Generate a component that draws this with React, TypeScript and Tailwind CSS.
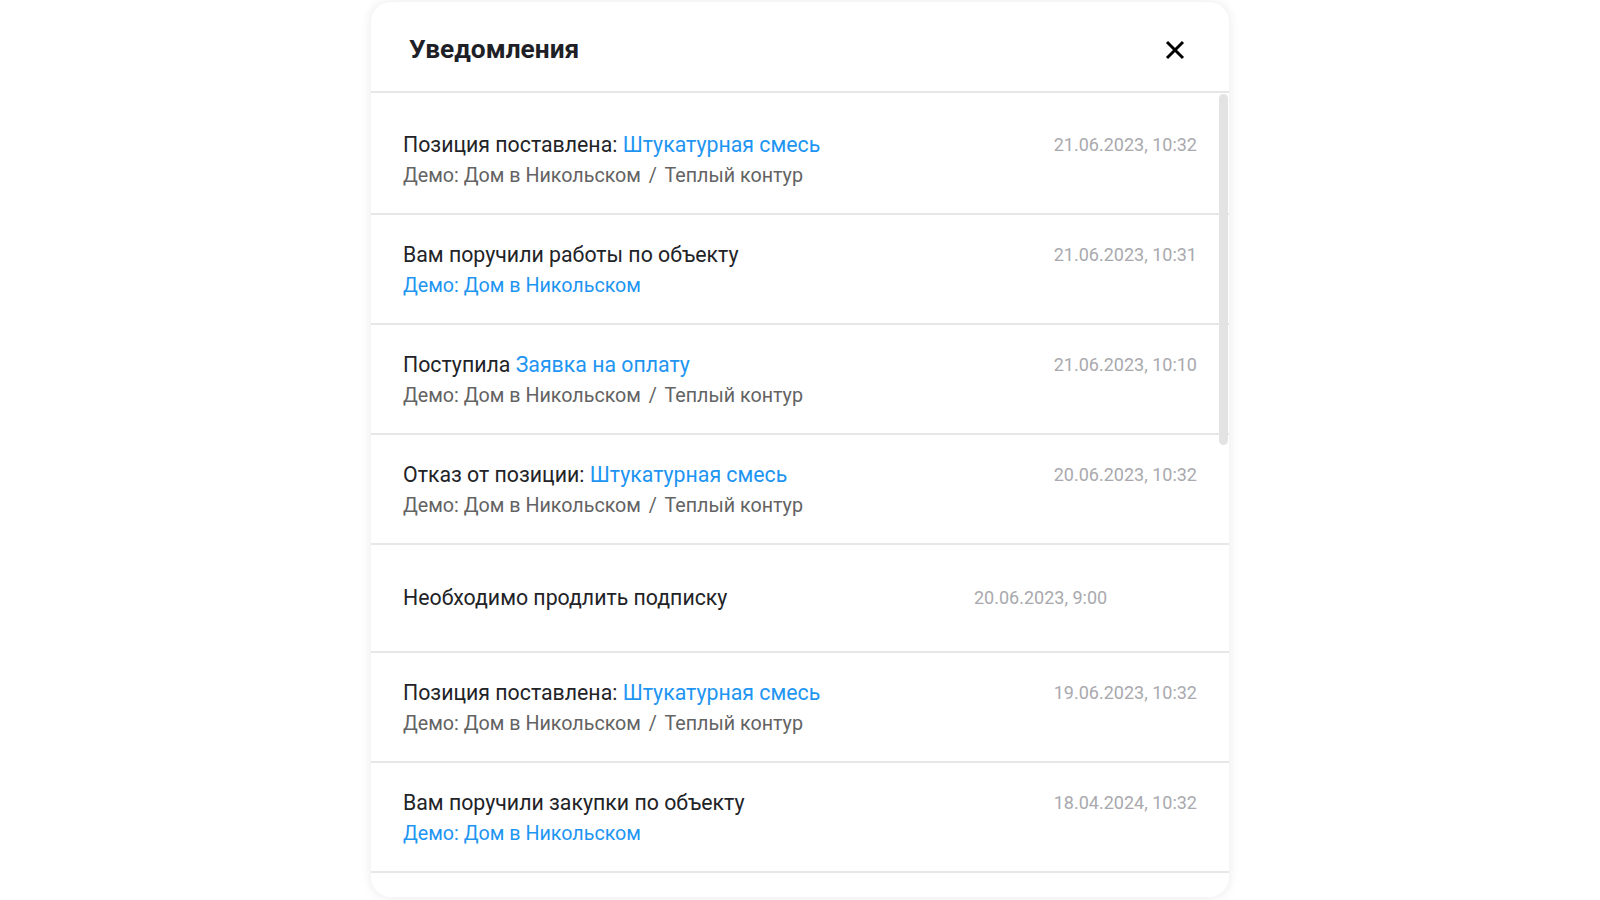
import type { ReactNode } from 'react'

type Notice = {
  title: ReactNode
  sub?: ReactNode
  date: string
  single?: boolean
}

const link = 'text-[#1e95f2]'
const path = (
  <span className="text-[#636363]">
    Демо: Дом в Никольском <span className="mx-[3px]">/</span> Теплый контур
  </span>
)
const object = <span className={link}>Демо: Дом в Никольском</span>

const notices: Notice[] = [
  {
    title: (
      <>
        Позиция поставлена: <span className={link}>Штукатурная смесь</span>
      </>
    ),
    sub: path,
    date: '21.06.2023, 10:32',
  },
  { title: 'Вам поручили работы по объекту', sub: object, date: '21.06.2023, 10:31' },
  {
    title: (
      <>
        Поступила <span className={link}>Заявка на оплату</span>
      </>
    ),
    sub: path,
    date: '21.06.2023, 10:10',
  },
  {
    title: (
      <>
        Отказ от позиции: <span className={link}>Штукатурная смесь</span>
      </>
    ),
    sub: path,
    date: '20.06.2023, 10:32',
  },
  { title: 'Необходимо продлить подписку', date: '20.06.2023, 9:00', single: true },
  {
    title: (
      <>
        Позиция поставлена: <span className={link}>Штукатурная смесь</span>
      </>
    ),
    sub: path,
    date: '19.06.2023, 10:32',
  },
  { title: 'Вам поручили закупки по объекту', sub: object, date: '18.04.2024, 10:32' },
]

function Row({ n }: { n: Notice }) {
  if (n.single) {
    return (
      <li className="flex h-[108px] shrink-0 items-center border-b-2 border-[#e7e7e7] pl-[32px]">
        <span className="w-[571px] text-[21.3px] leading-[30px] text-[#222327]">{n.title}</span>
        <span className="text-[18px] leading-[30px] text-[#a9a9ae]">{n.date}</span>
      </li>
    )
  }
  return (
    <li className="flex h-[110px] shrink-0 items-start justify-between border-b-2 border-[#e7e7e7] pl-[32px] pr-[32px] pt-[25px]">
      <div className="text-[#222327]">
        <div className="text-[21.3px] leading-[30px]">{n.title}</div>
        <div className="text-[19.7px] leading-[31px]">{n.sub}</div>
      </div>
      <span className="text-[18px] leading-[30px] text-[#a9a9ae]">{n.date}</span>
    </li>
  )
}

export default function App() {
  return (
    <div className="flex min-h-screen justify-center bg-white pt-[2px] font-['Roboto',sans-serif]">
      <div className="flex h-[895px] w-[858px] flex-col overflow-hidden rounded-[20px] bg-white shadow-[0_0_12px_rgba(0,0,0,0.09)]">
        <header className="flex h-[91px] shrink-0 items-center justify-between border-b-2 border-[#e7e7e7] pl-[38px] pr-[44px] pt-[6px]">
          <h2 className="text-[26.3px] font-bold text-[#1e1f27]">Уведомления</h2>
          <button type="button" aria-label="Закрыть" className="text-black">
            <svg width="20" height="20" viewBox="0 0 20 20" fill="none">
              <path d="M2 2L18 18M18 2L2 18" stroke="currentColor" strokeWidth="3" />
            </svg>
          </button>
        </header>

        <div className="relative flex-1 overflow-hidden">
          <ul className="flex flex-col pt-[12px]">
            {notices.map((n, i) => (
              <Row key={i} n={n} />
            ))}
          </ul>
          <div className="absolute right-[1px] top-[1px] h-[351px] w-[9px] rounded-full bg-[#e3e3e3]" />
        </div>
      </div>
    </div>
  )
}
